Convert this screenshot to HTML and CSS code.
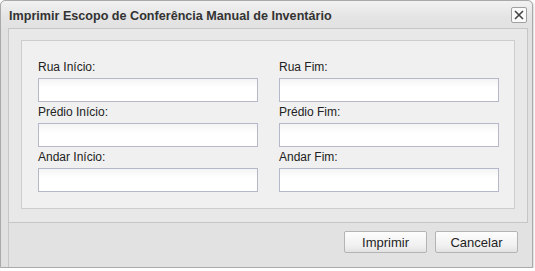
FILE: index.html
```html
<!DOCTYPE html>
<html lang="pt-BR">
<head>
    <meta charset="UTF-8">
    <title>Imprimir Escopo</title>
    <link rel="stylesheet" href="styles.css">
</head>
<body>
    <div class="window">
        <div class="header">
            <span class="title">Imprimir Escopo de Conferência Manual de Inventário</span>
            <span class="close">
                <svg width="12" height="12" viewBox="0 0 12 12">
                    <path d="M2 2 L10 10 M10 2 L2 10" stroke="#444" stroke-width="1.6" fill="none"/>
                </svg>
            </span>
        </div>

        <div class="body">
            <div class="fieldset">
                <div class="field">
                    <label>Rua Início:</label>
                    <input type="text">
                </div>
                <div class="field">
                    <label>Rua Fim:</label>
                    <input type="text">
                </div>
                <div class="field">
                    <label>Prédio Início:</label>
                    <input type="text">
                </div>
                <div class="field">
                    <label>Prédio Fim:</label>
                    <input type="text">
                </div>
                <div class="field">
                    <label>Andar Início:</label>
                    <input type="text">
                </div>
                <div class="field">
                    <label>Andar Fim:</label>
                    <input type="text">
                </div>
            </div>
        </div>

        <div class="footer">
            <button>Imprimir</button>
            <button>Cancelar</button>
        </div>
    </div>
</body>
</html>
```

FILE: styles.css
```css
body {
    margin: 0;
    background: #fff;
    font-family: "Liberation Sans", Arial, sans-serif;
    font-size: 12px;
}

.window {
    width: 531px;
    height: 266px;
    border: 1px solid #a9a9a9;
    border-radius: 5px 5px 0 0;
    background: #e1e1e1;
    display: flex;
    flex-direction: column;
    box-shadow: 1px 1px 2px rgba(0, 0, 0, 0.15);
}

.header {
    height: 27px;
    padding: 0 5px 0 8px;
    display: flex;
    align-items: center;
    justify-content: space-between;
    border-radius: 5px 5px 0 0;
    background: linear-gradient(#f2f2f2, #e4e4e4 60%, #e2e2e2);
}

.title {
    font-weight: bold;
    color: #333;
    font-size: 12.6px;
    padding-top: 2px;
}

.close {
    width: 14px;
    height: 14px;
    border: 1px solid #a0a0a0;
    border-radius: 2px;
    background: #fafafa;
    display: flex;
    align-items: center;
    justify-content: center;
}

.body {
    margin: 0 4px 0 7px;
    border: 1px solid #c6c6c6;
    background: #e8e8e8;
    padding: 11px 12px 13px;
}

.fieldset {
    border: 1px solid #cdcdcd;
    background: #f0f0f0;
    padding: 16px 16px 16px;
    display: grid;
    grid-template-columns: 220px 220px;
    column-gap: 21px;
}

.field label {
    display: block;
    height: 21px;
    line-height: 21px;
    color: #222;
}

.field input {
    display: block;
    box-sizing: border-box;
    width: 220px;
    height: 24px;
    margin: 0;
    border: 1px solid #b5b8c8;
    background: linear-gradient(#f4f4f4, #fff 40%);
}

.footer {
    flex: 1;
    display: flex;
    justify-content: flex-end;
    align-items: flex-start;
    gap: 8px;
    padding: 8px 14px 0 0;
    margin-left: 7px;
    border-left: 1px solid #c6c6c6;
    background: #e2e2e2;
}

.footer button {
    width: 83px;
    height: 22px;
    font-family: "Liberation Sans", Arial, sans-serif;
    font-size: 13px;
    color: #222;
    border: 1px solid #b4b4b4;
    border-radius: 2px;
    background: linear-gradient(#fdfdfd, #f0f0f0 70%, #e2e2e2);
}
```
